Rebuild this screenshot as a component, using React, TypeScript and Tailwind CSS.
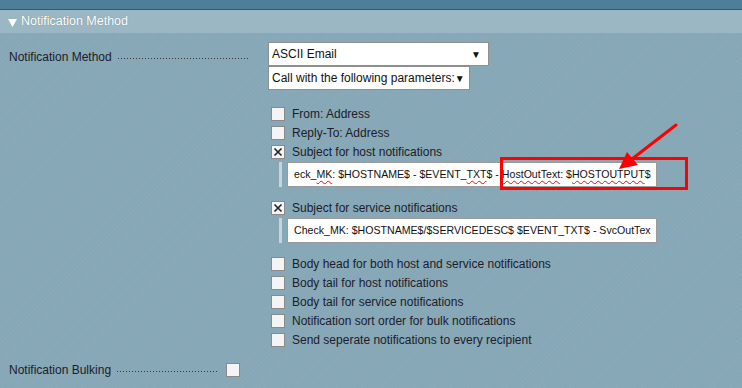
import React from "react";

const font = { fontFamily: '"Liberation Sans", Arial, sans-serif' };

function Box({ checked }: { checked?: boolean }) {
  return (
    <span className="flex h-[14px] w-[14px] shrink-0 items-center justify-center border border-[#8a8a8a] bg-[#f4f4f4]">
      {checked ? (
        <svg width="10" height="10" viewBox="0 0 10 10">
          <path d="M1.5 1.5 L8.5 8.5 M8.5 1.5 L1.5 8.5" stroke="#222" strokeWidth="1.6" />
        </svg>
      ) : null}
    </span>
  );
}

function CheckRow({ label, checked }: { label: string; checked?: boolean }) {
  return (
    <div className="flex h-[19px] items-center gap-[7px] pl-[3px]">
      <Box checked={checked} />
      <span>{label}</span>
    </div>
  );
}

function Spell({ children }: { children: React.ReactNode }) {
  return (
    <span className="underline decoration-wavy decoration-[#e01010] decoration-1 underline-offset-2">
      {children}
    </span>
  );
}

function SubInput({ children }: { children: React.ReactNode }) {
  return (
    <div className="flex pl-[11px]">
      <div className="w-[3px] bg-[#c9d3d8]" />
      <div className="ml-[5px] flex h-[25px] w-[370px] items-center overflow-hidden whitespace-nowrap border border-[#9a9a9a] bg-white pl-[6px] text-[10.6px] text-[#111]">
        {children}
      </div>
    </div>
  );
}

function Label({ text }: { text: string }) {
  return (
    <div className="flex items-baseline">
      <span>{text}</span>
      <span className="ml-[6px] h-[1px] flex-1 translate-y-[-2px] bg-[repeating-linear-gradient(90deg,#3a3a3a_0px,#3a3a3a_1px,transparent_1px,transparent_3px)]" />
    </div>
  );
}

export default function App() {
  return (
    <div
      style={font}
      className="relative h-[388px] w-[742px] overflow-hidden bg-[#86a7b6] bg-[repeating-linear-gradient(135deg,rgba(255,255,255,0.03)_0px,rgba(255,255,255,0.03)_1px,transparent_1px,transparent_3px)] text-[12px] text-[#1c1c2a]"
    >
      <div className="h-[9px] bg-[#4f7f98]" />
      <div className="h-[1px] bg-[#35596b]" />
      <div className="flex h-[23px] items-center gap-[4px] bg-[#9bb7c3] pl-[8px] text-[12.5px] text-white [text-shadow:0_0_1px_rgba(0,0,0,0.3)]">
        <svg width="9" height="8" viewBox="0 0 9 8" className="mt-[2px]">
          <polygon points="0,0 9,0 4.5,8" fill="#fff" />
        </svg>
        <span>Notification Method</span>
      </div>

      <div className="flex pt-[9px]">
        <div className="w-[268px] shrink-0 pl-[9px] pr-[19px] pt-[6px]">
          <Label text="Notification Method" />
        </div>
        <div className="flex flex-col">
          <div className="flex h-[24px] w-[221px] items-center justify-between border border-[#8f8f8f] bg-white pl-[3px] pr-[7px] text-[#111]">
            <span>ASCII Email</span>
            <span className="text-[10px]">▼</span>
          </div>
          <div className="flex h-[24px] w-[202px] items-center border border-[#8f8f8f] bg-white pl-[3px] text-[#111]">
            <span>Call with the following parameters:</span>
            <span className="text-[10px]">▼</span>
          </div>
        </div>
      </div>

      <div className="ml-[268px] mt-[14px] flex flex-col">
        <CheckRow label="From: Address" />
        <CheckRow label="Reply-To: Address" />
        <CheckRow label="Subject for host notifications" checked />
        <div className="mt-[1px]">
          <SubInput>
            <span>
              eck_<Spell>MK</Spell>: $HOSTNAME$ - $EVENT_<Spell>TXT</Spell>$ - <Spell>HostOutText</Spell>: $
              <Spell>HOSTOUTPUT</Spell>$
            </span>
          </SubInput>
        </div>
        <div className="mt-[11px]">
          <CheckRow label="Subject for service notifications" checked />
        </div>
        <div className="mt-[1px]">
          <SubInput>
            <span>Check_MK: $HOSTNAME$/$SERVICEDESC$ $EVENT_TXT$ - SvcOutTex</span>
          </SubInput>
        </div>
        <div className="mt-[11px]">
          <CheckRow label="Body head for both host and service notifications" />
          <CheckRow label="Body tail for host notifications" />
          <CheckRow label="Body tail for service notifications" />
          <CheckRow label="Notification sort order for bulk notifications" />
          <CheckRow label="Send seperate notifications to every recipient" />
        </div>
      </div>

      <div className="mt-[11px] flex h-[19px] items-center pl-[9px]">
        <div className="w-[209px]">
          <Label text="Notification Bulking" />
        </div>
        <span className="ml-[8px]">
          <Box />
        </span>
      </div>

      <div className="absolute left-[500px] top-[157px] h-[33px] w-[188px] border-[3px] border-[#ff0000]" />
      <svg className="absolute left-0 top-0" width="742" height="388">
        <line x1="676" y1="125" x2="632" y2="159" stroke="#ff0000" strokeWidth="3" strokeLinecap="round" />
        <polygon points="619,169 627,152 638,165" fill="#ff0000" />
      </svg>
    </div>
  );
}
